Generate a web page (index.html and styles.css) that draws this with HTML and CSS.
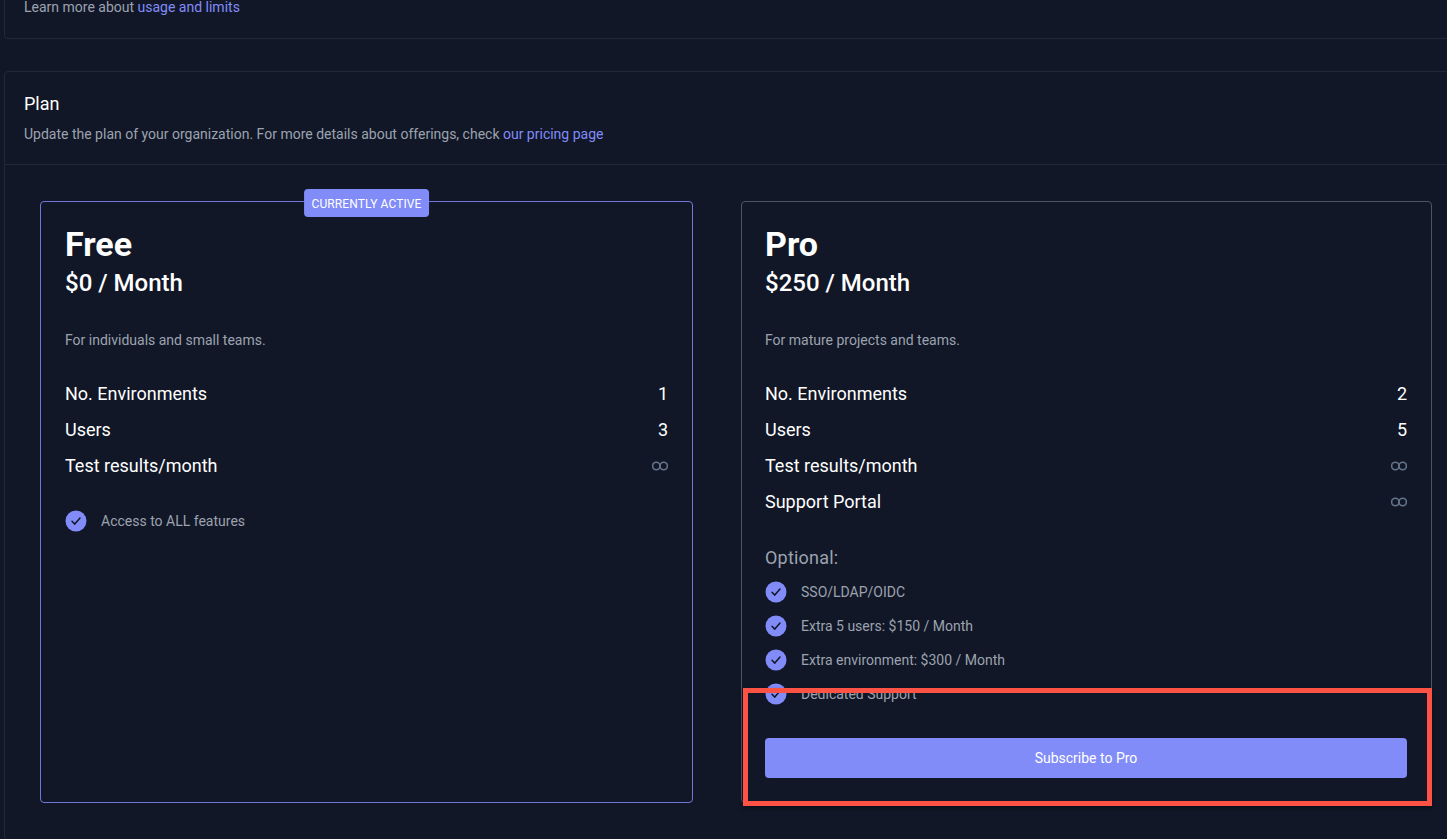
FILE: index.html
```html
<!DOCTYPE html>
<html lang="en">
<head>
  <meta charset="UTF-8">
  <meta name="viewport" content="width=device-width, initial-scale=1.0">
  <title>Plan</title>
  <link rel="stylesheet" href="styles.css">
</head>
<body>
  <svg class="defs" width="0" height="0">
    <symbol id="check" viewBox="0 0 22 22">
      <circle cx="11" cy="11" r="10.5" fill="#818cf8"/>
      <path d="M7 11.300l2.800 2.800 5.200-6" fill="none" stroke="#111727" stroke-width="1.500" stroke-linecap="round" stroke-linejoin="round"/>
    </symbol>
    <symbol id="infinity" viewBox="0 0 16 10">
      <circle cx="4.300" cy="5" r="3.700" fill="none" stroke="#64748b" stroke-width="1.600"/>
      <circle cx="11.700" cy="5" r="3.700" fill="none" stroke="#64748b" stroke-width="1.600"/>
    </symbol>
  </svg>

  <!-- Usage panel, scrolled mostly out of view -->
  <section class="panel usage-panel">
    <p class="muted">Learn more about <a href="#">usage and limits</a></p>
  </section>

  <!-- Plan panel -->
  <section class="panel plan-panel">
    <header class="panel-header">
      <h2>Plan</h2>
      <p class="muted">Update the plan of your organization. For more details about offerings, check <a href="#">our pricing page</a></p>
    </header>

    <div class="plans">
      <article class="card card-active">
        <span class="badge">CURRENTLY ACTIVE</span>
        <h3>Free</h3>
        <div class="price">$0 / Month</div>
        <p class="muted blurb">For individuals and small teams.</p>
        <ul class="limits">
          <li><span>No. Environments</span><span>1</span></li>
          <li><span>Users</span><span>3</span></li>
          <li><span>Test results/month</span><svg class="inf"><use href="#infinity"/></svg></li>
        </ul>
        <ul class="features features-free">
          <li><svg class="tick"><use href="#check"/></svg>Access to ALL features</li>
        </ul>
      </article>

      <article class="card card-pro">
        <h3>Pro</h3>
        <div class="price">$250 / Month</div>
        <p class="muted blurb">For mature projects and teams.</p>
        <ul class="limits">
          <li><span>No. Environments</span><span>2</span></li>
          <li><span>Users</span><span>5</span></li>
          <li><span>Test results/month</span><svg class="inf"><use href="#infinity"/></svg></li>
          <li><span>Support Portal</span><svg class="inf"><use href="#infinity"/></svg></li>
        </ul>
        <div class="optional">Optional:</div>
        <ul class="features">
          <li><svg class="tick"><use href="#check"/></svg>SSO/LDAP/OIDC</li>
          <li><svg class="tick"><use href="#check"/></svg>Extra 5 users: $150 / Month</li>
          <li><svg class="tick"><use href="#check"/></svg>Extra environment: $300 / Month</li>
          <li><svg class="tick"><use href="#check"/></svg>Dedicated Support</li>
        </ul>
        <button class="subscribe" type="button">Subscribe to Pro</button>
        <div class="highlight"></div>
      </article>
    </div>
  </section>
</body>
</html>
```

FILE: styles.css
```css
/* Base */
html, body {
  height: 100%;
  overflow: hidden;
}

body {
  margin: 0;
  padding-left: 4px;
  background-color: #111727;
  color: #fff;
  font-family: 'Roboto', sans-serif;
  font-size: 14px;
  line-height: 20px;
}

h2, h3, p, ul {
  margin: 0;
  padding: 0;
}

ul {
  list-style: none;
}

a {
  color: #818cf8;
  text-decoration: none;
}

.defs {
  position: absolute;
}

.muted {
  color: #9ca3af;
}

/* Panels */
.panel {
  width: 1500px;
  border: 1px solid #1f2937;
  border-radius: 4px;
}

.usage-panel {
  margin-top: -20px;
  height: 59px;
  padding: 16px 19px 0;
  box-sizing: border-box;
}

.plan-panel {
  margin-top: 32px;
}

.panel-header {
  padding: 20px 19px 20px;
  border-bottom: 1px solid #1f2937;
}

.panel-header h2 {
  font-size: 18px;
  font-weight: 400;
  line-height: 24px;
  margin-bottom: 8px;
}

/* Plan cards */
.plans {
  display: grid;
  grid-template-columns: 653px 691px;
  column-gap: 48px;
  padding: 36px 35px;
}

.card {
  position: relative;
  display: flex;
  flex-direction: column;
  padding: 24px;
  border: 1px solid #4b5563;
  border-radius: 4px;
}

.card-pro {
  padding-left: 23px;
}

.card-active {
  border-color: #6f78d8;
}

.badge {
  position: absolute;
  top: -13px;
  left: 50%;
  transform: translateX(-50%);
  padding: 5px 8px 3px;
  background-color: #818cf8;
  border-radius: 4px;
  font-size: 12px;
  font-weight: 400;
  letter-spacing: 0.1px;
  white-space: nowrap;
}

.card h3 {
  font-size: 34px;
  font-weight: 700;
  line-height: 36px;
}

.price {
  margin-top: 5px;
  font-size: 24px;
  font-weight: 480;
  line-height: 32px;
}

.blurb {
  margin-top: 31px;
}

.limits {
  margin-top: 26px;
}

.limits li {
  display: flex;
  justify-content: space-between;
  align-items: center;
  height: 36px;
  font-size: 18px;
  font-weight: 450;
}

.inf {
  width: 16px;
  height: 10px;
}

.optional {
  margin-top: 24px;
  color: #9ca3af;
  font-size: 18px;
  font-weight: 400;
  letter-spacing: 0.2px;
  line-height: 28px;
}

.features {
  margin-top: 3px;
}

.features-free {
  margin-top: 20px;
}

.features li {
  display: flex;
  align-items: center;
  height: 34px;
  color: #9ca3af;
}

.tick {
  width: 22px;
  height: 22px;
  margin-right: 14px;
  flex-shrink: 0;
}

.subscribe {
  margin-top: 27px;
  height: 40px;
  background-color: #818cf8;
  border: 0;
  border-radius: 4px;
  color: #fff;
  font-family: inherit;
  font-size: 14px;
  font-weight: 400;
}

/* Red annotation box over the subscribe area */
.highlight {
  position: absolute;
  left: 1px;
  right: -1px;
  bottom: -4px;
  height: 118px;
  box-sizing: border-box;
  border: 5px solid #fe5245;
  box-shadow: 0 2px 4px rgba(0, 0, 0, 0.4);
}
```
